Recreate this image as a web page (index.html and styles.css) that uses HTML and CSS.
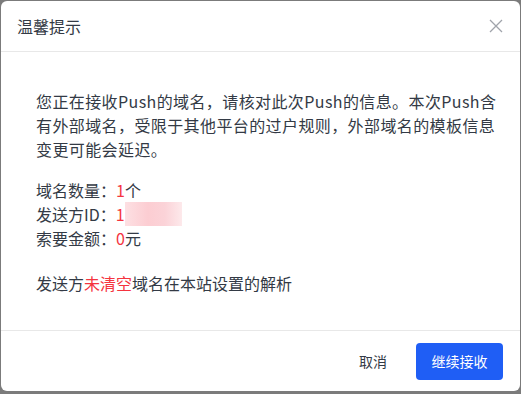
FILE: index.html
```html
<!DOCTYPE html>
<html lang="zh-CN">
<head>
    <meta charset="UTF-8">
    <meta name="viewport" content="width=device-width, initial-scale=1.0">
    <title>温馨提示</title>
    <link rel="stylesheet" href="styles.css">
</head>
<body>
    <div class="mask">
        <div class="dialog">
            <div class="dialog-head">
                <span class="dialog-title">温馨提示</span>
                <span class="dialog-close">
                    <svg width="14" height="14" viewBox="0 0 14 14">
                        <path d="M1 1L13 13M13 1L1 13" stroke="#a0a4ab" stroke-width="1.3" fill="none"/>
                    </svg>
                </span>
            </div>
            <div class="dialog-body">
                <p class="intro">您正在接收Push的域名，请核对此次Push的信息。本次Push含<br>有外部域名，受限于其他平台的过户规则，外部域名的模板信息<br>变更可能会延迟。</p>
                <div class="info">
                    <div>域名数量：<span class="red">1</span>个</div>
                    <div>发送方ID：<span class="red">1</span><span class="blur"></span></div>
                    <div>索要金额：<span class="red">0</span>元</div>
                </div>
                <p class="note">发送方<span class="red">未清空</span>域名在本站设置的解析</p>
            </div>
            <div class="dialog-foot">
                <button class="btn btn-text">取消</button>
                <button class="btn btn-primary">继续接收</button>
            </div>
        </div>
    </div>
</body>
</html>
```

FILE: styles.css
```css
*, *::before, *::after {
    box-sizing: border-box;
}
body {
    margin: 0;
    font-family: "Microsoft YaHei", "Noto Sans CJK SC", "Noto Sans", sans-serif;
    color: #333a45;
}
.mask {
    width: 521px;
    height: 394px;
    background: #7b7b7b;
    padding: 1px 1px 3px 1px;
}
.dialog {
    height: 100%;
    background: #fff;
    border-radius: 6px;
    display: flex;
    flex-direction: column;
}
.dialog-head {
    height: 51px;
    border-bottom: 1px solid #e8e8e8;
    display: flex;
    align-items: center;
    justify-content: space-between;
    padding: 0 17px 0 16px;
}
.dialog-title {
    font-size: 16px;
    color: #333a45;
}
.dialog-close {
    display: flex;
}
.dialog-body {
    flex: 1;
    padding: 37px 20px 0 35px;
    font-size: 16px;
    line-height: 24px;
    white-space: nowrap;
}
.intro {
    margin: 0;
    letter-spacing: 0.4px;
}
.info {
    margin-top: 17px;
}
.blur {
    display: inline-block;
    width: 57px;
    height: 24px;
    vertical-align: top;
    background: linear-gradient(90deg, #fde0e3 0%, #fccdd2 40%, #fbd3d8 70%, #fde9eb 100%);
}
.note {
    margin: 21px 0 0 0;
}
.red {
    color: #f5343f;
}
.dialog-foot {
    height: 61px;
    border-top: 1px solid #e8e8e8;
    display: flex;
    align-items: center;
    justify-content: flex-end;
    padding: 0 17px 0 0;
    gap: 17px;
}
.btn {
    font-family: inherit;
    font-size: 14px;
    border: none;
    border-radius: 4px;
    height: 37px;
    cursor: pointer;
}
.btn-text {
    background: none;
    color: #333a45;
    padding: 0 12px;
}
.btn-primary {
    background: #1f5ef5;
    color: #fff;
    width: 87px;
}
```
